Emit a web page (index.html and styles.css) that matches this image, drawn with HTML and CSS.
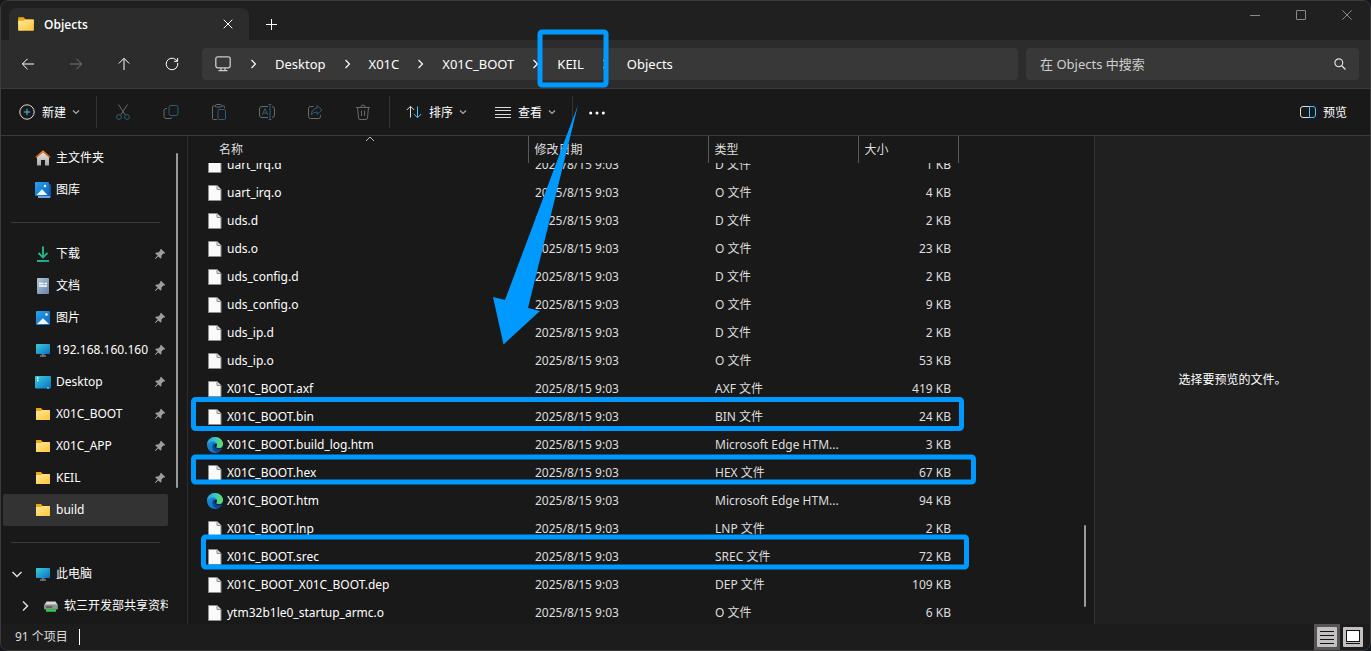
FILE: index.html
```html
<!DOCTYPE html>
<html lang="zh-CN">
<head>
  <meta charset="UTF-8">
  <title>Objects</title>
  <link rel="stylesheet" href="styles.css">
</head>
<body>

  <!-- Iconos -->
  <svg class="sprite" width="0" height="0">
    <defs>
      <linearGradient id="gFolder" x1="0" y1="0" x2="1" y2="1"><stop offset="0" stop-color="#ffe9a0"/><stop offset="1" stop-color="#ffc533"/></linearGradient>
      <linearGradient id="gBlue" x1="0" y1="0" x2="1" y2="1"><stop offset="0" stop-color="#2aa4f0"/><stop offset="1" stop-color="#0a62bd"/></linearGradient>
      <linearGradient id="gTeal" x1="0" y1="0" x2="1" y2="1"><stop offset="0" stop-color="#39d0dc"/><stop offset="1" stop-color="#0c6fc4"/></linearGradient>
      <linearGradient id="gHome" x1="0" y1="0" x2="0" y2="1"><stop offset="0" stop-color="#e8e8e8"/><stop offset="1" stop-color="#a9a9a9"/></linearGradient>
      <linearGradient id="gRoof" x1="0" y1="0" x2="0" y2="1"><stop offset="0" stop-color="#f5902a"/><stop offset="1" stop-color="#c74a12"/></linearGradient>
      <linearGradient id="gDown" gradientUnits="userSpaceOnUse" x1="2" y1="0" x2="14" y2="16"><stop offset="0" stop-color="#35d07f"/><stop offset="1" stop-color="#12a39a"/></linearGradient>
      <linearGradient id="gDoc" x1="0" y1="0" x2="1" y2="1"><stop offset="0" stop-color="#b4c7d8"/><stop offset="1" stop-color="#6484a6"/></linearGradient>
      <linearGradient id="gEdgeTop" x1="0" y1="0" x2="1" y2="0"><stop offset="0" stop-color="#2a9fe0"/><stop offset="0.5" stop-color="#36c6c8"/><stop offset="1" stop-color="#6be04a"/></linearGradient>
      <linearGradient id="gEdgeLow" x1="0" y1="0" x2="1" y2="1"><stop offset="0" stop-color="#1b9be6"/><stop offset="1" stop-color="#0c59b4"/></linearGradient>
    </defs>

    <symbol id="folder" viewBox="0 0 16 16">
      <path d="M1 2.6Q1 2 1.6 2H6l1.6 2H14.4q.6 0 .6.6V8H1z" fill="#eda90d"/>
      <path d="M1 5.3Q1 5 1.5 5H6l1.3-1H14.4q.6 0 .6.6v8.8q0 .6-.6.6H1.6q-.6 0-.6-.6z" fill="url(#gFolder)"/>
    </symbol>
    <symbol id="file" viewBox="0 0 16 16">
      <path d="M1.500.5h8.500l4 4v11H1.500z" fill="#fafafa" stroke="#8e8e8e"/>
      <path d="M10 .5v4h4" fill="#ddd" stroke="#8e8e8e"/>
    </symbol>
    <symbol id="edge" viewBox="0 0 16 16">
      <circle cx="8" cy="8" r="8" fill="url(#gEdgeLow)"/>
      <path d="M0 7.600C.4 3.200 3.800 0 8 0c4.600 0 8 3.400 8 7 0 2.600-2 4.200-4.200 4.200-1.700 0-2.700-.6-2.700-1.200 0-.5.8-.8.8-2C9.900 6 8 4.600 5.600 4.600 3 4.600 1 6 0 7.600z" fill="url(#gEdgeTop)"/>
      <path d="M6 7.200C4.600 10.500 6.400 14.500 10.300 15 12.600 14.700 14.300 13 15 11.700c-3 1.500-7 .8-7.200-2.400 0-.8.4-1.500.8-1.800-.7-.9-1.900-1-2.600-.3z" fill="#0a478f"/>
      <path d="M9.100 10c0-.5.8-.8.8-2 0-.6-.3-1.200-.7-1.700-1.400.6-1.900 2.200-1.300 3.600.7 1.700 3 2.700 5.100 2.500 1.200-.1 2.200-.5 2.700-.9l.2-2.100c-.9 1.300-2.400 1.800-4.100 1.800-1.700 0-2.700-.6-2.700-1.200z" fill="#191919"/>
    </symbol>
    <symbol id="home" viewBox="0 0 16 16">
      <path d="M2 7l6-5 6 5v8q0 .5-.5.500H10V10H6v5.500H2.500Q2 15.500 2 15z" fill="url(#gHome)"/>
      <path d="M8 .3L.6 6.500q-.3.300 0 .8l.7.600L8 2.600l6.700 5.300.7-.6q.3-.5 0-.8z" fill="url(#gRoof)"/>
    </symbol>
    <symbol id="gallery" viewBox="0 0 16 16">
      <rect x="3" y="2" width="13" height="14" rx="1.500" fill="#1556a0"/>
      <path d="M3 15h12" stroke="#8fbdf0" stroke-width="1.500"/>
      <rect x="0" y="0" width="14" height="14" rx="1" fill="url(#gBlue)"/>
      <path d="M1.500 13L7 7.300l5.500 5.700z" fill="#f1f7ff"/>
      <circle cx="10" cy="4" r="1.200" fill="#fff"/>
    </symbol>
    <symbol id="picture" viewBox="0 0 16 16">
      <rect x="1" y="1" width="14" height="14" rx="1" fill="url(#gBlue)"/>
      <path d="M2 14l6-5.700 6 5.700z" fill="#f1f7ff"/>
      <circle cx="11.500" cy="4.500" r="1.200" fill="#fff"/>
    </symbol>
    <symbol id="download" viewBox="0 0 16 16">
      <path d="M8 .5v11M3.500 7L8 11.500 12.500 7M2 15h12" fill="none" stroke="url(#gDown)" stroke-width="1.800"/>
    </symbol>
    <symbol id="doc" viewBox="0 0 16 16">
      <rect x="2" y="0" width="12" height="16" rx="1" fill="url(#gDoc)"/>
      <path d="M4 5.500h4.500M4 8h8M9.500 5.500H12" stroke="#fff" stroke-width="1.300"/>
    </symbol>
    <symbol id="pc" viewBox="0 0 16 16">
      <rect x="1" y="2" width="14" height="10" rx=".8" fill="url(#gTeal)"/>
      <path d="M6.500 12h3v1.500h-3z" fill="#5d6c78"/><path d="M5 14h6" stroke="#a8b2ba"/>
    </symbol>
    <symbol id="desktop" viewBox="0 0 16 16">
      <rect x="0" y="2" width="16" height="12.500" rx="1" fill="url(#gTeal)"/>
      <path d="M2 4h1.400M2 6.500h1.400" stroke="#fff" stroke-width="1.400"/><path d="M12 14h2" stroke="#bfe4ff"/>
    </symbol>
    <symbol id="drive" viewBox="0 0 16 16">
      <path d="M3.500 3.500h9l2.500 4H1z" fill="#d8d8d8"/>
      <rect x="1" y="6.500" width="14" height="5" rx="1" fill="#8b8f90"/>
      <path d="M3 9h6" stroke="#333"/><path d="M11 9h2" stroke="#3de05a"/>
      <path d="M3 12.500h10" stroke="#2fcf49" stroke-width="2.500"/>
    </symbol>
    <symbol id="pin" viewBox="0 0 12 12">
      <path d="M7 .8L11.200 5l-1 .8-.9-.2-1.800 2-.1 2.400-.9.600L4.300 8.400 1.500 11 .8 11 1 10.400 3.600 7.600 1.300 5.400l.7-.9 2.300-.1 2-1.900L6.200 1.600z" fill="#98a0a6"/>
    </symbol>
    <symbol id="chevDown" viewBox="0 0 8 8"><path d="M1 2.500l3 3 3-3" fill="none" stroke="currentColor" stroke-width="1.200"/></symbol>
    <symbol id="chevRight" viewBox="0 0 8 12"><path d="M2 2l4 4-4 4" fill="none" stroke="currentColor" stroke-width="1.200"/></symbol>
  </svg>

  <div class="window">
    <header class="titlebar">
      <div class="tab">
        <svg class="icon tab-icon"><use href="#folder"/></svg>
        <span class="tab-title">Objects</span>
        <button class="tab-close" aria-label="关闭标签页"><svg width="10" height="10" viewBox="0 0 10 10"><path d="M.7.7l8.600 8.600M9.300.7L.7 9.300" stroke="currentColor"/></svg></button>
      </div>
      <button class="tab-new" aria-label="新标签页"><svg width="11" height="11" viewBox="0 0 11 11"><path d="M5.500 0v11M0 5.500h11" stroke="currentColor"/></svg></button>
      <div class="win-buttons">
        <button aria-label="最小化"><svg width="10" height="10" viewBox="0 0 10 10"><path d="M0 5.500h10" stroke="currentColor"/></svg></button>
        <button aria-label="最大化"><svg width="10" height="10" viewBox="0 0 10 10"><rect x=".5" y=".5" width="9" height="9" rx=".5" fill="none" stroke="currentColor"/></svg></button>
        <button aria-label="关闭"><svg width="10" height="10" viewBox="0 0 10 10"><path d="M.3.3l9.400 9.400M9.700.3L.3 9.700" stroke="currentColor"/></svg></button>
      </div>
    </header>

    <nav class="navbar">
      <div class="nav-buttons">
        <button aria-label="后退"><svg viewBox="0 0 16 16"><path d="M14 8H2.500M7.500 2.800L2.300 8l5.200 5.200"/></svg></button>
        <button aria-label="前进" disabled><svg viewBox="0 0 16 16"><path d="M2 8h11.500M8.500 2.800L13.700 8l-5.200 5.200"/></svg></button>
        <button aria-label="向上"><svg viewBox="0 0 16 16"><path d="M8 14V2.500M2.800 7.500L8 2.300l5.200 5.200"/></svg></button>
        <button aria-label="刷新"><svg viewBox="0 0 16 16"><path d="M13.700 7A5.800 5.800 0 1 1 11.800 3.600l1.700 1.600M13.600 2v3.300h-3.500"/></svg></button>
      </div>
      <div class="address">
        <svg class="monitor" width="16" height="16" viewBox="0 0 16 16"><rect x=".8" y=".8" width="14.400" height="11" rx="2" fill="none" stroke="#ccc" stroke-width="1.300"/><path d="M6 12v2.500M10 12v2.500M3.500 14.700h9" stroke="#ccc" stroke-width="1.300"/></svg>
        <svg class="sep"><use href="#chevRight"/></svg>
        <button>Desktop</button>
        <svg class="sep"><use href="#chevRight"/></svg>
        <button>X01C</button>
        <svg class="sep"><use href="#chevRight"/></svg>
        <button>X01C_BOOT</button>
        <svg class="sep"><use href="#chevRight"/></svg>
        <button>KEIL</button>
        <svg class="sep"><use href="#chevRight"/></svg>
        <button>Objects</button>
      </div>
      <label class="search">
        <input type="text" placeholder="在 Objects 中搜索" aria-label="在 Objects 中搜索">
        <svg width="12" height="12" viewBox="0 0 12 12"><circle cx="4.800" cy="4.800" r="3.900" fill="none" stroke="#ddd" stroke-width="1.200"/><path d="M7.700 7.700l3.800 3.800" stroke="#ddd" stroke-width="1.300"/></svg>
      </label>
    </nav>

    <div class="toolbar">
      <button class="tool">
        <svg class="icon" viewBox="0 0 16 16" fill="none"><circle cx="8" cy="8" r="7.200" stroke="#ddd"/><path d="M8 4.800v6.400M4.800 8h6.400" stroke="#4cc2ff"/></svg>
        <span>新建</span><svg class="drop"><use href="#chevDown"/></svg>
      </button>
      <i class="divider"></i>
      <button class="tool-icon" aria-label="剪切" disabled><svg class="icon" viewBox="0 0 16 16" fill="none"><path d="M3.500.5l6.700 10.300M12.500.5L5.800 10.800" stroke="#6a6a6a"/><g stroke="#2c5e78"><circle cx="4" cy="13" r="2.400"/><circle cx="12" cy="13" r="2.400"/></g></svg></button>
      <button class="tool-icon" aria-label="复制" disabled><svg class="icon" viewBox="0 0 16 16" fill="none"><path d="M4 4.500H3Q1 4.500 1 6.500v6q0 2 2 2h4q2 0 2-1" stroke="#6a6a6a"/><rect x="6" y="1.500" width="9" height="10" rx="2" stroke="#2c5e78"/></svg></button>
      <button class="tool-icon" aria-label="粘贴" disabled><svg class="icon" viewBox="0 0 16 16" fill="none"><path d="M4.500 2H2.500Q1.500 2 1.500 3v11.500q0 1 1 1H6M10.500 2h2q1 0 1 1v1" stroke="#6a6a6a"/><rect x="4.500" y=".5" width="6" height="2.500" rx="1" stroke="#6a6a6a"/><rect x="7" y="5.500" width="7.500" height="10" rx="1" stroke="#2c5e78"/></svg></button>
      <button class="tool-icon" aria-label="重命名" disabled><svg class="icon" viewBox="0 0 16 16" fill="none"><path d="M9 2.500H3Q.5 2.500.5 5v6q0 2.500 2.500 2.500h6M13 2.500q2.500 0 2.500 2.500v6q0 2.500-2.500 2.500" stroke="#6a6a6a"/><path d="M3.300 11L6 4.500 8.700 11M4.300 9h3.400M11 1v14M9.500.5h3M9.500 15.500h3" stroke="#2c5e78"/></svg></button>
      <button class="tool-icon" aria-label="共享" disabled><svg class="icon" viewBox="0 0 16 16" fill="none"><path d="M6.500 2.500H3.500q-2 0-2 2v8q0 2 2 2h8q2 0 2-2V11" stroke="#6a6a6a"/><path d="M10 1.500L15 6l-5 4.500V8Q6 7.800 4.200 11 4.600 4.800 10 4.200z" stroke="#2c5e78"/></svg></button>
      <button class="tool-icon" aria-label="删除" disabled><svg class="icon" viewBox="0 0 16 16" fill="none" stroke="#6a6a6a"><path d="M1 3.500h14M5.800 3.300Q6 1 8 1t2.200 2.300M2.500 3.500l1 10.500q.1 1.500 1.500 1.500h6q1.400 0 1.500-1.500l1-10.500M6.500 6.500v5.500M9.500 6.500v5.500"/></svg></button>
      <i class="divider"></i>
      <button class="tool">
        <svg class="icon" viewBox="0 0 16 16" fill="none"><path d="M4.500 13.500V2.500M.8 6l3.700-3.700L8.200 6" stroke="#ddd"/><path d="M11.500 2.500v11M7.800 10l3.700 3.700L15.200 10" stroke="#4cc2ff"/></svg>
        <span>排序</span><svg class="drop"><use href="#chevDown"/></svg>
      </button>
      <button class="tool">
        <svg class="icon" viewBox="0 0 16 16"><path d="M0 3.500h16M0 6.500h16M0 10.500h16M0 13.500h16" stroke="#ddd"/></svg>
        <span>查看</span><svg class="drop"><use href="#chevDown"/></svg>
      </button>
      <i class="divider"></i>
      <button class="tool-more" aria-label="更多"><svg class="icon" viewBox="0 0 16 16" fill="#fff"><circle cx="1.700" cy="9" r="1.500"/><circle cx="8" cy="9" r="1.500"/><circle cx="14.300" cy="9" r="1.500"/></svg></button>
      <button class="tool tool-preview">
        <svg class="icon" viewBox="0 0 16 16" fill="none"><path d="M9.500 2.500H3Q.5 2.500.5 5v6q0 2.500 2.500 2.500h6.500" stroke="#ddd"/><path d="M9.500 2.500H13q2.500 0 2.500 2.500v6q0 2.500-2.500 2.500H9.500z" stroke="#4cc2ff"/></svg>
        <span>预览</span>
      </button>
    </div>

    <div class="content">
      <aside class="sidebar">
        <div class="places">
          <a href="#" class="place"><svg class="icon"><use href="#home"/></svg><span>主文件夹</span></a>
          <a href="#" class="place"><svg class="icon"><use href="#gallery"/></svg><span>图库</span></a>
          <hr>
          <a href="#" class="place"><svg class="icon"><use href="#download"/></svg><span>下载</span><svg class="pin"><use href="#pin"/></svg></a>
          <a href="#" class="place"><svg class="icon"><use href="#doc"/></svg><span>文档</span><svg class="pin"><use href="#pin"/></svg></a>
          <a href="#" class="place"><svg class="icon"><use href="#picture"/></svg><span>图片</span><svg class="pin"><use href="#pin"/></svg></a>
          <a href="#" class="place"><svg class="icon"><use href="#pc"/></svg><span>192.168.160.160</span><svg class="pin"><use href="#pin"/></svg></a>
          <a href="#" class="place"><svg class="icon"><use href="#desktop"/></svg><span>Desktop</span><svg class="pin"><use href="#pin"/></svg></a>
          <a href="#" class="place"><svg class="icon"><use href="#folder"/></svg><span>X01C_BOOT</span><svg class="pin"><use href="#pin"/></svg></a>
          <a href="#" class="place"><svg class="icon"><use href="#folder"/></svg><span>X01C_APP</span><svg class="pin"><use href="#pin"/></svg></a>
          <a href="#" class="place"><svg class="icon"><use href="#folder"/></svg><span>KEIL</span><svg class="pin"><use href="#pin"/></svg></a>
          <a href="#" class="place selected"><svg class="icon"><use href="#folder"/></svg><span>build</span></a>
          <hr>
          <a href="#" class="place tree"><svg class="twist" viewBox="0 0 12 12"><path d="M1.500 4L6 8.500 10.500 4"/></svg><svg class="icon"><use href="#pc"/></svg><span>此电脑</span></a>
          <a href="#" class="place tree sub"><svg class="twist" viewBox="0 0 12 12"><path d="M4 1.500L8.500 6 4 10.500"/></svg><svg class="icon"><use href="#drive"/></svg><span>软三开发部共享资料</span></a>
        </div>
        <div class="track"><div class="thumb"></div></div>
      </aside>

      <main class="files">
        <div class="list">
          <table class="head">
            <colgroup><col class="c-name"><col class="c-date"><col class="c-type"><col class="c-size"></colgroup>
            <tr>
              <th class="sorted">名称<svg class="sort-mark" viewBox="0 0 10 6"><path d="M1 5l4-4 4 4" fill="none" stroke="#bbb"/></svg></th>
              <th>修改日期</th><th>类型</th><th>大小</th>
            </tr>
          </table>
          <div class="rows">
            <table>
              <colgroup><col class="c-name"><col class="c-date"><col class="c-type"><col class="c-size"></colgroup>
              <tr><td><svg class="icon"><use href="#file"/></svg>uart_irq.d</td><td>2025/8/15 9:03</td><td>D 文件</td><td>1 KB</td></tr>
              <tr><td><svg class="icon"><use href="#file"/></svg>uart_irq.o</td><td>2025/8/15 9:03</td><td>O 文件</td><td>4 KB</td></tr>
              <tr><td><svg class="icon"><use href="#file"/></svg>uds.d</td><td>2025/8/15 9:03</td><td>D 文件</td><td>2 KB</td></tr>
              <tr><td><svg class="icon"><use href="#file"/></svg>uds.o</td><td>2025/8/15 9:03</td><td>O 文件</td><td>23 KB</td></tr>
              <tr><td><svg class="icon"><use href="#file"/></svg>uds_config.d</td><td>2025/8/15 9:03</td><td>D 文件</td><td>2 KB</td></tr>
              <tr><td><svg class="icon"><use href="#file"/></svg>uds_config.o</td><td>2025/8/15 9:03</td><td>O 文件</td><td>9 KB</td></tr>
              <tr><td><svg class="icon"><use href="#file"/></svg>uds_ip.d</td><td>2025/8/15 9:03</td><td>D 文件</td><td>2 KB</td></tr>
              <tr><td><svg class="icon"><use href="#file"/></svg>uds_ip.o</td><td>2025/8/15 9:03</td><td>O 文件</td><td>53 KB</td></tr>
              <tr><td><svg class="icon"><use href="#file"/></svg>X01C_BOOT.axf</td><td>2025/8/15 9:03</td><td>AXF 文件</td><td>419 KB</td></tr>
              <tr><td><svg class="icon"><use href="#file"/></svg>X01C_BOOT.bin</td><td>2025/8/15 9:03</td><td>BIN 文件</td><td>24 KB</td></tr>
              <tr><td><svg class="icon"><use href="#edge"/></svg>X01C_BOOT.build_log.htm</td><td>2025/8/15 9:03</td><td>Microsoft Edge HTM...</td><td>3 KB</td></tr>
              <tr><td><svg class="icon"><use href="#file"/></svg>X01C_BOOT.hex</td><td>2025/8/15 9:03</td><td>HEX 文件</td><td>67 KB</td></tr>
              <tr><td><svg class="icon"><use href="#edge"/></svg>X01C_BOOT.htm</td><td>2025/8/15 9:03</td><td>Microsoft Edge HTM...</td><td>94 KB</td></tr>
              <tr><td><svg class="icon"><use href="#file"/></svg>X01C_BOOT.lnp</td><td>2025/8/15 9:03</td><td>LNP 文件</td><td>2 KB</td></tr>
              <tr><td><svg class="icon"><use href="#file"/></svg>X01C_BOOT.srec</td><td>2025/8/15 9:03</td><td>SREC 文件</td><td>72 KB</td></tr>
              <tr><td><svg class="icon"><use href="#file"/></svg>X01C_BOOT_X01C_BOOT.dep</td><td>2025/8/15 9:03</td><td>DEP 文件</td><td>109 KB</td></tr>
              <tr><td><svg class="icon"><use href="#file"/></svg>ytm32b1le0_startup_armc.o</td><td>2025/8/15 9:03</td><td>O 文件</td><td>6 KB</td></tr>
            </table>
          </div>
        </div>
        <div class="track"><div class="thumb"></div></div>
      </main>

      <section class="preview">选择要预览的文件。</section>
    </div>

    <footer class="status">
      <span class="count">91 个项目</span>
      <div class="views">
        <button class="active" aria-label="详细信息"><svg width="20" height="20" viewBox="0 0 20 20"><rect width="20" height="20" rx="1" fill="#c4c0c2"/><path d="M3 4.500h14M3 8.500h14M3 12.500h14M3 16.500h14" stroke="#111"/></svg></button>
        <button aria-label="大图标"><svg width="20" height="20" viewBox="0 0 20 20"><rect width="20" height="20" rx="1" fill="#c4c0c2"/><rect x="3.500" y="3.500" width="13" height="11" fill="#fff" stroke="#111"/><path d="M3 16.500h14" stroke="#111"/></svg></button>
      </div>
    </footer>
  </div>

  <!-- Marcas azules sobre la ventana -->
  <svg class="marks" width="1371" height="651" viewBox="0 0 1371 651">
    <g fill="none" stroke="#0099ff" stroke-width="5">
      <rect x="540" y="32" width="66" height="53" rx="2"/>
      <rect x="193.500" y="399.500" width="768" height="29" rx="2"/>
      <rect x="193.500" y="457" width="780" height="25" rx="2"/>
      <rect x="203.500" y="537" width="763" height="30" rx="2"/>
    </g>
    <path d="M578 105L528 308l12 3-36.500 33.500L493 297l12 3z" fill="#0099ff"/>
  </svg>

</body>
</html>
```

FILE: styles.css
```css
* {
  box-sizing: border-box;
}

body {
  margin: 0;
  height: 100vh;
  background-color: #15171f;
  color: #fff;
  font-family: "Noto Sans", "Noto Sans CJK SC", sans-serif;
  font-size: 12px;
  line-height: 16px;
}

button {
  display: flex;
  align-items: center;
  justify-content: center;
  padding: 0;
  border: none;
  background: none;
  color: inherit;
  font: inherit;
}

svg {
  display: block;
  flex: none;
}

.sprite {
  position: absolute;
}

.icon {
  width: 16px;
  height: 16px;
}

.window {
  display: flex;
  flex-direction: column;
  height: 100%;
  border: 1px solid #3c3c3c;
  border-radius: 8px;
  background-color: #191919;
  overflow: hidden;
}

/* Barra de título */
.titlebar {
  display: flex;
  height: 39px;
  background-color: #202020;
}

.tab {
  display: flex;
  align-items: center;
  width: 240px;
  margin: 7px 0 0 8px;
  padding: 0 16px 0 8px;
  border-radius: 8px 8px 0 0;
  background-color: #2c2c2c;
}

.tab-icon {
  width: 18px;
  height: 18px;
}

.tab-title {
  flex: 1;
  margin-left: 9px;
  padding-top: 2px;
  font-family: "Open Sans", sans-serif;
  font-weight: 600;
}

.tab-new {
  width: 45px;
  padding-top: 8px;
}

.win-buttons {
  display: flex;
  margin-left: auto;
  color: #8a8a8a;
}

.win-buttons button {
  width: 46px;
  height: 28px;
}

/* Navegación */
.navbar {
  display: flex;
  align-items: center;
  gap: 8px;
  height: 49px;
  padding-right: 11px;
  border-bottom: 1px solid #3a3a3a;
  background-color: #2c2c2c;
  font-size: 13px;
}

.nav-buttons {
  display: flex;
  width: 193px;
  padding-left: 3px;
}

.nav-buttons button {
  flex: none;
  width: 48px;
  height: 32px;
}

.nav-buttons svg {
  width: 16px;
  height: 16px;
  fill: none;
  stroke: #fff;
}

.nav-buttons button:disabled svg {
  stroke: #777;
}

.address {
  display: flex;
  flex: 1;
  align-items: center;
  gap: 17px;
  height: 32px;
  padding-left: 13px;
  border-radius: 4px;
  background-color: #383838;
}

.sep {
  width: 9px;
  height: 12px;
}

.address .monitor {
  margin-right: 1px;
}

.search {
  display: flex;
  align-items: center;
  width: 333px;
  height: 32px;
  padding: 0 13px 0 14px;
  border-radius: 4px;
  background-color: #383838;
}

.search input {
  flex: 1;
  padding: 0;
  border: none;
  outline: none;
  background: none;
  color: #fff;
  font: inherit;
}

.search input::placeholder {
  color: #cfcfcf;
}

/* Comandos */
.toolbar {
  display: flex;
  align-items: center;
  height: 47px;
  padding: 0 9px 0 4px;
  border-bottom: 1px solid #3a3a3a;
}

.tool {
  height: 32px;
  padding: 0 14px;
  gap: 6px;
}

.tool .icon {
  margin-right: 1px;
}

.tool span {
  padding-top: 2px;
}

.drop {
  width: 8px;
  height: 8px;
  color: #aaa;
}

.divider {
  width: 1px;
  height: 32px;
  margin: 0 2px;
  background-color: #333;
}

.tool-icon {
  width: 48px;
  height: 32px;
}

.tool-more {
  width: 44px;
  height: 32px;
}

.tool-preview {
  margin-left: auto;
}

.content {
  display: flex;
  flex: 1;
  min-height: 0;
}

/* Panel lateral */
.sidebar {
  display: flex;
  width: 187px;
  border-right: 1px solid #2c2c2c;
}

.places {
  width: 167px;
  padding: 6px 0 0 2px;
  overflow: hidden;
}

.place {
  display: flex;
  align-items: center;
  gap: 5px;
  height: 32px;
  padding: 0 2px 0 32px;
  border-radius: 2px;
  color: #fff;
  text-decoration: none;
  white-space: nowrap;
}

.place.selected {
  background-color: #333;
}

.place .pin {
  width: 12px;
  height: 12px;
  margin-left: auto;
}

.place.tree {
  padding: 0 0 0 8px;
}

.place.sub {
  padding-left: 16px;
}

.twist {
  width: 12px;
  height: 12px;
  margin-right: 7px;
  fill: none;
  stroke: #ddd;
  stroke-width: 1.5;
}

.places hr {
  height: 1px;
  margin: 16px 8px 15px;
  border: none;
  background-color: #3a3a3a;
}

.track {
  width: 12px;
  padding-left: 2px;
}

.thumb {
  width: 2px;
  border-radius: 1px;
  background-color: #9a9a9a;
}

.sidebar .track {
  margin-left: 6px;
  padding-top: 17px;
}

.sidebar .thumb {
  height: 335px;
}

/* Lista de archivos */
.files {
  display: flex;
  flex: 1;
  min-width: 0;
}

.list {
  display: flex;
  flex: 1;
  flex-direction: column;
  min-width: 0;
}

table {
  width: 770px;
  border-collapse: collapse;
  table-layout: fixed;
}

.c-name {
  width: 340px;
}

.c-date {
  width: 180px;
}

.c-type {
  width: 150px;
}

.c-size {
  width: 100px;
}

th {
  height: 27px;
  padding: 0 6px;
  border-right: 1px solid #5a5a5a;
  color: #dedede;
  font-weight: normal;
  text-align: left;
}

th.sorted {
  position: relative;
  padding-left: 31px;
}

.sort-mark {
  position: absolute;
  top: 0;
  left: 52%;
  width: 10px;
  height: 6px;
}

.rows {
  flex: 1;
  min-height: 0;
  overflow: hidden;
}

/* la lista está desplazada hasta el final */
.rows table {
  margin-top: -12px;
}

td {
  height: 28px;
  padding: 0 7px;
  color: #dedede;
  white-space: nowrap;
}

td:first-child {
  padding-left: 19px;
  color: #fff;
}

td:last-child {
  text-align: right;
}

td .icon {
  display: inline-block;
  margin-right: 4px;
  vertical-align: middle;
}

.files .thumb {
  height: 82px;
  margin-top: 389px;
}

.preview {
  display: flex;
  align-items: center;
  justify-content: center;
  width: 276px;
  border-left: 1px solid #333;
  background-color: #202020;
}

/* Barra de estado */
.status {
  display: flex;
  align-items: center;
  justify-content: space-between;
  height: 26px;
  padding: 0 4px 0 14px;
  background-color: #1c1c1c;
  color: #dedede;
}

.count {
  padding-right: 11px;
  border-right: 1px solid #fff;
}

.views {
  display: flex;
}

.views button {
  width: 26px;
  height: 26px;
}

.views .active {
  background-color: #555;
}

.marks {
  position: absolute;
  top: 0;
  left: 0;
  pointer-events: none;
}
```
